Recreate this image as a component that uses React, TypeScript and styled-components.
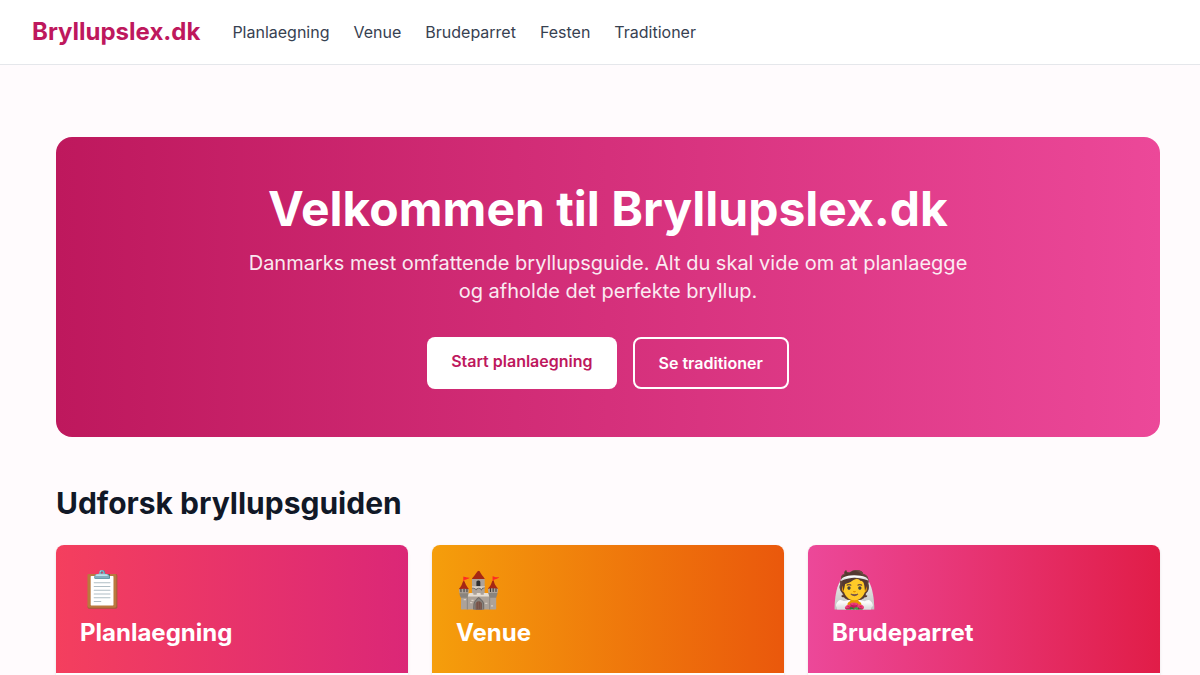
import React from "react";
import styled, { createGlobalStyle } from "styled-components";

const GlobalStyle = createGlobalStyle`
  *, *::before, *::after { box-sizing: border-box; }
  body {
    margin: 0;
    background: #fffbfd;
    color: #111827;
    font-family: Inter, "Liberation Sans", sans-serif;
    font-size: 16px;
    line-height: 24px;
  }
  h1, h2, h3, p { margin: 0; }
  a { color: inherit; text-decoration: none; }
`;

const Header = styled.header`
  display: flex;
  align-items: center;
  gap: 32px;
  padding: 16px 32px;
  background: #ffffff;
  border-bottom: 1px solid #e5e7eb;
`;

const Brand = styled.a`
  color: #be185d;
  font-size: 24px;
  font-weight: 700;
  line-height: 32px;
`;

const Nav = styled.nav`
  display: flex;
  gap: 24px;
  color: #374151;
`;

const Main = styled.main`
  max-width: 1200px;
  margin: 0 auto;
  padding: 72px 40px 32px 56px;
`;

const Hero = styled.section`
  display: flex;
  flex-direction: column;
  align-items: center;
  padding: 48px;
  border-radius: 16px;
  background: linear-gradient(to right, #be185d, #ec4899);
  color: #ffffff;
  text-align: center;
`;

const HeroTitle = styled.h1`
  font-size: 48px;
  font-weight: 700;
  line-height: 48px;
  margin-bottom: 16px;
`;

const HeroText = styled.p`
  max-width: 720px;
  font-size: 20px;
  line-height: 28px;
  opacity: 0.9;
  margin-bottom: 32px;
`;

const Actions = styled.div`
  display: flex;
  gap: 16px;
`;

const Action = styled.a<{ $outline?: boolean }>`
  padding: 12px 24px;
  border-radius: 8px;
  font-weight: 600;
  background: ${(p) => (p.$outline ? "transparent" : "#ffffff")};
  color: ${(p) => (p.$outline ? "#ffffff" : "#be185d")};
  border: ${(p) => (p.$outline ? "2px solid #ffffff" : "none")};
`;

const SectionTitle = styled.h2`
  margin: 48px 0 24px;
  font-size: 30px;
  font-weight: 700;
  line-height: 36px;
`;

const Grid = styled.div`
  display: grid;
  grid-template-columns: repeat(3, 1fr);
  gap: 24px;
`;

const Card = styled.a`
  display: block;
  overflow: hidden;
  padding-bottom: 24px;
  border-radius: 8px;
  background: #ffffff;
  box-shadow: 0 1px 3px rgba(0, 0, 0, 0.1);
`;

const CardBanner = styled.div<{ $from: string; $to: string }>`
  padding: 24px;
  background: linear-gradient(to right, ${(p) => p.$from}, ${(p) => p.$to});
  color: #ffffff;
`;

const Emoji = styled.div`
  font-size: 36px;
  line-height: 40px;
  margin-bottom: 8px;
`;

const CardTitle = styled.h3`
  font-size: 24px;
  font-weight: 700;
  line-height: 32px;
`;

const links = ["Planlaegning", "Venue", "Brudeparret", "Festen", "Traditioner"];

const cards = [
  { emoji: "📋", title: "Planlaegning", from: "#f43f5e", to: "#db2777" },
  { emoji: "🏰", title: "Venue", from: "#f59e0b", to: "#ea580c" },
  { emoji: "👰", title: "Brudeparret", from: "#ec4899", to: "#e11d48" },
];

export default function App() {
  return (
    <>
      <GlobalStyle />
      <Header>
        <Brand href="#">Bryllupslex.dk</Brand>
        <Nav>
          {links.map((label) => (
            <a key={label} href={`#${label.toLowerCase()}`}>{label}</a>
          ))}
        </Nav>
      </Header>
      <Main>
        <Hero>
          <HeroTitle>Velkommen til Bryllupslex.dk</HeroTitle>
          <HeroText>
            Danmarks mest omfattende bryllupsguide. Alt du skal vide om at planlaegge og afholde det perfekte bryllup.
          </HeroText>
          <Actions>
            <Action href="#planlaegning">Start planlaegning</Action>
            <Action href="#traditioner" $outline>Se traditioner</Action>
          </Actions>
        </Hero>
        <SectionTitle>Udforsk bryllupsguiden</SectionTitle>
        <Grid>
          {cards.map((card) => (
            <Card key={card.title} href={`#${card.title.toLowerCase()}`}>
              <CardBanner $from={card.from} $to={card.to}>
                <Emoji aria-hidden="true">{card.emoji}</Emoji>
                <CardTitle>{card.title}</CardTitle>
              </CardBanner>
            </Card>
          ))}
        </Grid>
      </Main>
    </>
  );
}
